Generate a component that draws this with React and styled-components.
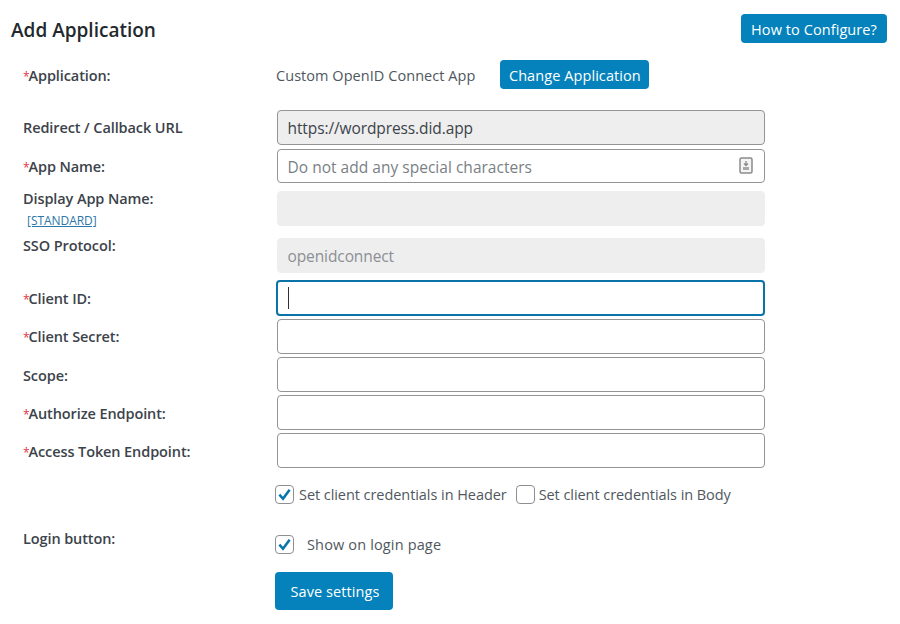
import React from "react";
import styled, { createGlobalStyle } from "styled-components";

const Global = createGlobalStyle`
  html, body { margin: 0; padding: 0; background: #fff; }
  body { font-family: "Open Sans", "Noto Sans", "Liberation Sans", sans-serif; color: #3c434a; }
`;

const Page = styled.div`
  width: 900px;
  height: 624px;
  padding: 14px 13px 0 11px;
  box-sizing: border-box;
  overflow: hidden;
`;

const Header = styled.header`
  display: flex;
  justify-content: space-between;
  align-items: center;
  height: 29px;
`;

const Title = styled.h1`
  margin: 4px 0 0;
  font-size: 19px;
  line-height: 29px;
  font-weight: 600;
  color: #23282d;
  letter-spacing: 0;
`;

const Button = styled.button`
  height: ${(p) => p.$h || 29}px;
  width: ${(p) => p.$w}px;
  margin-left: ${(p) => p.$ml || 0}px;
  padding: ${(p) => p.$pt ?? 2}px 0 0 ${(p) => p.$pl || 0}px;
  border: 0;
  border-radius: 4px;
  background: #0582bb;
  color: #fff;
  font-family: inherit;
  font-size: 14.5px;
  letter-spacing: 0.08px;
`;

const Form = styled.div`
  display: flex;
  flex-direction: column;
  padding-left: 12px;
`;

const Row = styled.div`
  display: grid;
  grid-template-columns: 253px 489px;
  height: ${(p) => p.$h || 35}px;
  margin-top: ${(p) => p.$mt ?? 3}px;
  align-items: ${(p) => (p.$top ? "start" : "center")};
`;

const Label = styled.div`
  font-size: 14.5px;
  line-height: 20px;
  font-weight: 600;
  color: #3c434a;
  letter-spacing: -0.1px;
  margin-top: ${(p) => p.$mt ?? 2}px;
`;

const Star = styled.span`
  color: #e2324a;
  font-weight: 400;
  font-size: 12px;
  margin-right: -1px;
`;

const Sub = styled.a`
  display: block;
  margin: 4px 0 0 4px;
  font-size: 12px;
  line-height: 16px;
  font-weight: 400;
  letter-spacing: -0.05px;
  color: #2b76a8;
  text-decoration: underline;
`;

const Static = styled.div`
  display: flex;
  align-items: center;
  gap: 25px;
  font-size: 14.5px;
  color: #50575e;
  letter-spacing: 0.05px;
`;

const StaticText = styled.span`
  padding-top: 2px;
`;

const FieldWrap = styled.div`
  position: relative;
  height: ${(p) => p.$h || 35}px;
  margin-left: ${(p) => (p.$focus ? 0 : 1)}px;
`;

const Input = styled.div`
  box-sizing: border-box;
  height: 100%;
  display: flex;
  align-items: center;
  padding: ${(p) => (p.$nudge ? "1px" : "0")} 10px 0 ${(p) => (p.$focus ? 10 : 9.5)}px;
  border-radius: 4px;
  font-size: 15.5px;
  letter-spacing: ${(p) => (p.$nudge ? 0.02 : -0.1)}px;
  border: ${(p) => (p.$focus ? "2px solid #0a74a8" : p.$flat ? "1px solid #eeeeee" : "1px solid #949494")};
  background: ${(p) => (p.$grey ? "#eeeeee" : "#fff")};
  color: ${(p) => p.$color || "#3c434a"};
`;

const Caret = styled.span`
  width: 1px;
  height: 22px;
  background: #2c3338;
`;

const KeyIcon = styled.svg`
  position: absolute;
  right: 12px;
  top: 8px;
`;

const Checks = styled.div`
  display: flex;
  align-items: center;
  font-size: 14.5px;
  color: #50575e;
  letter-spacing: ${(p) => p.$ls}px;
  margin-left: -1px;
`;

const Box = styled.span`
  box-sizing: border-box;
  width: 19px;
  height: 19px;
  flex: none;
  border: 1px solid #8c8f94;
  border-radius: 4px;
  background: #fff;
  display: inline-flex;
  align-items: center;
  justify-content: center;
  margin-right: ${(p) => p.$gap}px;
  margin-left: ${(p) => p.$ml || 0}px;
`;

const Check = ({ on, gap, ml, children }) => (
  <>
    <Box $gap={gap} $ml={ml}>
      {on && (
        <svg width="15" height="15" viewBox="0 0 14 14">
          <path d="M2.2 7.2 L5.6 11 L11.8 2.6" fill="none" stroke="#0a74ad" strokeWidth="2.4" />
        </svg>
      )}
    </Box>
    <span>{children}</span>
  </>
);

const fields = [
  { req: true, label: "Client ID:", focus: true, mt: 7, h: 36 },
  { req: true, label: "Client Secret:", mt: 3, h: 35 },
  { label: "Scope:", mt: 3, h: 35 },
  { req: true, label: "Authorize Endpoint:", mt: 3, h: 35, lmt: 4 },
  { req: true, label: "Access Token Endpoint:", mt: 3, h: 35, lmt: 4 },
];

export default function App() {
  return (
    <Page>
      <Global />
      <Header>
        <Title>Add Application</Title>
        <Button $w={146}>How to Configure?</Button>
      </Header>
      <Form>
        <Row $h={29} $mt={17}>
          <Label $mt={4}><Star>*</Star>Application:</Label>
          <Static>
            <StaticText>Custom OpenID Connect App</StaticText>
            <Button $w={149}>Change Application</Button>
          </Static>
        </Row>
        <Row $mt={21}>
          <Label $mt={0}>Redirect / Callback URL</Label>
          <FieldWrap><Input $grey>https://wordpress.did.app</Input></FieldWrap>
        </Row>
        <Row $h={34} $mt={4}>
          <Label><Star>*</Star>App Name:</Label>
          <FieldWrap $h={34}>
            <Input $nudge $color="#7a7f85">Do not add any special characters</Input>
            <KeyIcon width="14" height="17" viewBox="0 0 14 17">
              <rect x="1" y="1" width="12" height="15" rx="1.5" fill="#f4f4f4" stroke="#8a8a8a" strokeWidth="1.5" />
              <path d="M7 4v4M5 6.5 7 8.5 9 6.5" fill="none" stroke="#8a8a8a" strokeWidth="1.3" />
              <rect x="4" y="10" width="6" height="3" fill="#a8a8a8" />
            </KeyIcon>
          </FieldWrap>
        </Row>
        <Row $h={35} $mt={8} $top>
          <Label $mt={-2}>
            Display App Name:
            <Sub>[STANDARD]</Sub>
          </Label>
          <FieldWrap><Input $grey $flat /></FieldWrap>
        </Row>
        <Row $h={35} $mt={12} $top>
          <Label $mt={-2}>SSO Protocol:</Label>
          <FieldWrap><Input $grey $flat $color="#8c8f94">openidconnect</Input></FieldWrap>
        </Row>
        {fields.map((f) => (
          <Row key={f.label} $h={f.h} $mt={f.mt}>
            <Label $mt={f.lmt}>{f.req && <Star>*</Star>}{f.label}</Label>
            <FieldWrap $h={f.h} $focus={f.focus}>
              <Input $focus={f.focus}>{f.focus && <Caret />}</Input>
            </FieldWrap>
          </Row>
        ))}
        <Row $h={22} $mt={15}>
          <span />
          <Checks $ls={-0.06}>
            <Check on gap={5}>Set client credentials in Header</Check>
            <Check gap={4} ml={9}>Set client credentials in Body</Check>
          </Checks>
        </Row>
        <Row $h={22} $mt={30} $top>
          <Label $mt={-6}>Login button:</Label>
          <Checks $ls={0.15}>
            <Check on gap={13}>Show on login page</Check>
          </Checks>
        </Row>
        <Row $h={38} $mt={15}>
          <span />
          <Button $w={118} $h={38} $ml={-1} $pt={0} $pl={2}>Save settings</Button>
        </Row>
      </Form>
    </Page>
  );
}
